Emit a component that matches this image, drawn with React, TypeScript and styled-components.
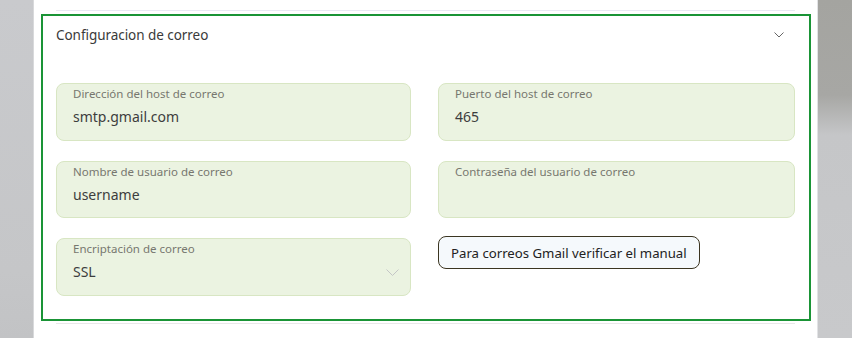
import React from 'react';
import styled, { createGlobalStyle } from 'styled-components';

const GlobalStyle = createGlobalStyle`
	html, body {
		margin: 0;
		padding: 0;
	}
	body {
		font-family: 'Noto Sans', 'Liberation Sans', sans-serif;
		background: #c8c9cc;
	}
`;

const Page = styled.div`
	display: flex;
	height: 338px;
	width: 852px;
	overflow: hidden;
`;

const Side = styled.div<{ $dark?: boolean }>`
	width: ${(props) => (props.$dark ? '34px' : '33px')};
	flex-shrink: 0;
	background: ${(props) =>
		props.$dark
			? 'linear-gradient(to bottom, #a4a4a0 0px, #a7a7a4 95px, #c5c6c8 135px, #c8c9cb 338px)'
			: 'linear-gradient(to bottom, #c9cacd, #c5c6c8 80%, #c2c3c5)'};
`;

const Panel = styled.div`
	flex: 1;
	background: #ffffff;
	display: flex;
	flex-direction: column;
	border-left: 1px solid #d8d9db;
	border-right: 1px solid #e2e3e5;
`;

const Divider = styled.div<{ $color: string }>`
	height: 1px;
	margin: 0 22px;
	background: ${(props) => props.$color};
`;

const Accordion = styled.section`
	margin: 3px 6px 2px 7px;
	border: 2px solid #1a9436;
`;

const Header = styled.div`
	display: flex;
	align-items: center;
	justify-content: space-between;
	padding: 9px 25px 0 13px;
	height: 20px;
`;

const Title = styled.span`
	font-size: 13.5px;
	color: #3a3a3a;
	letter-spacing: -0.05px;
`;

const Body = styled.div`
	display: grid;
	grid-template-columns: 355px 357px;
	grid-template-rows: 58px 57px 58px;
	column-gap: 27px;
	row-gap: 20px;
	padding: 38px 14px 23px 13px;
`;

const Field = styled.div`
	position: relative;
	background: #ebf3e1;
	border: 1px solid #d8e6c3;
	border-radius: 8px;
	padding: 3px 16px 0 16px;
	box-sizing: border-box;
`;

const Label = styled.div`
	font-size: 11.5px;
	line-height: 14px;
	color: #77776f;
`;

const Value = styled.div`
	margin-top: 6px;
	font-size: 14px;
	line-height: 20px;
	color: #3d3d3d;
`;

const SelectArrow = styled.svg`
	position: absolute;
	right: 11px;
	top: 30px;
`;

const ManualButton = styled.button`
	align-self: start;
	justify-self: start;
	margin-top: -2px;
	height: 33px;
	padding: 0 12px;
	border: 1px solid #3b3521;
	border-radius: 8px;
	background: #f5f9fc;
	font-family: 'Noto Sans', 'Liberation Sans', sans-serif;
	font-size: 13.2px;
	color: #222222;
	cursor: pointer;
`;

const Chevron: React.FC<{ color: string; size: number }> = ({ color, size }) => (
	<svg width={size} height={size * 0.6} viewBox="0 0 10 6" fill="none">
		<polyline points="0.5,0.5 5,5 9.5,0.5" stroke={color} strokeWidth="1" />
	</svg>
);

const fields = [
	{ label: 'Dirección del host de correo', value: 'smtp.gmail.com' },
	{ label: 'Puerto del host de correo', value: '465' },
	{ label: 'Nombre de usuario de correo', value: 'username' },
	{ label: 'Contraseña del usuario de correo', value: '' },
];

export default function App() {
	return (
		<>
			<GlobalStyle />
			<Page>
				<Side />
				<Panel>
					<Divider $color="#e9e9f4" style={{ marginTop: '10px' }} />
					<Accordion>
						<Header>
							<Title>Configuracion de correo</Title>
							<Chevron color="#666666" size={10} />
						</Header>
						<Body>
							{fields.map((field) => (
								<Field key={field.label}>
									<Label>{field.label}</Label>
									<Value>{field.value}</Value>
								</Field>
							))}
							<Field>
								<Label>Encriptación de correo</Label>
								<Value>SSL</Value>
								<SelectArrow width="13" height="8" viewBox="0 0 13 8" fill="none">
									<polyline points="0.5,0.5 6.5,6.5 12.5,0.5" stroke="#c4c6c6" strokeWidth="1" />
								</SelectArrow>
							</Field>
							<ManualButton>Para correos Gmail verificar el manual</ManualButton>
						</Body>
					</Accordion>
					<Divider $color="#e8e8e8" />
				</Panel>
				<Side $dark />
			</Page>
		</>
	);
}
